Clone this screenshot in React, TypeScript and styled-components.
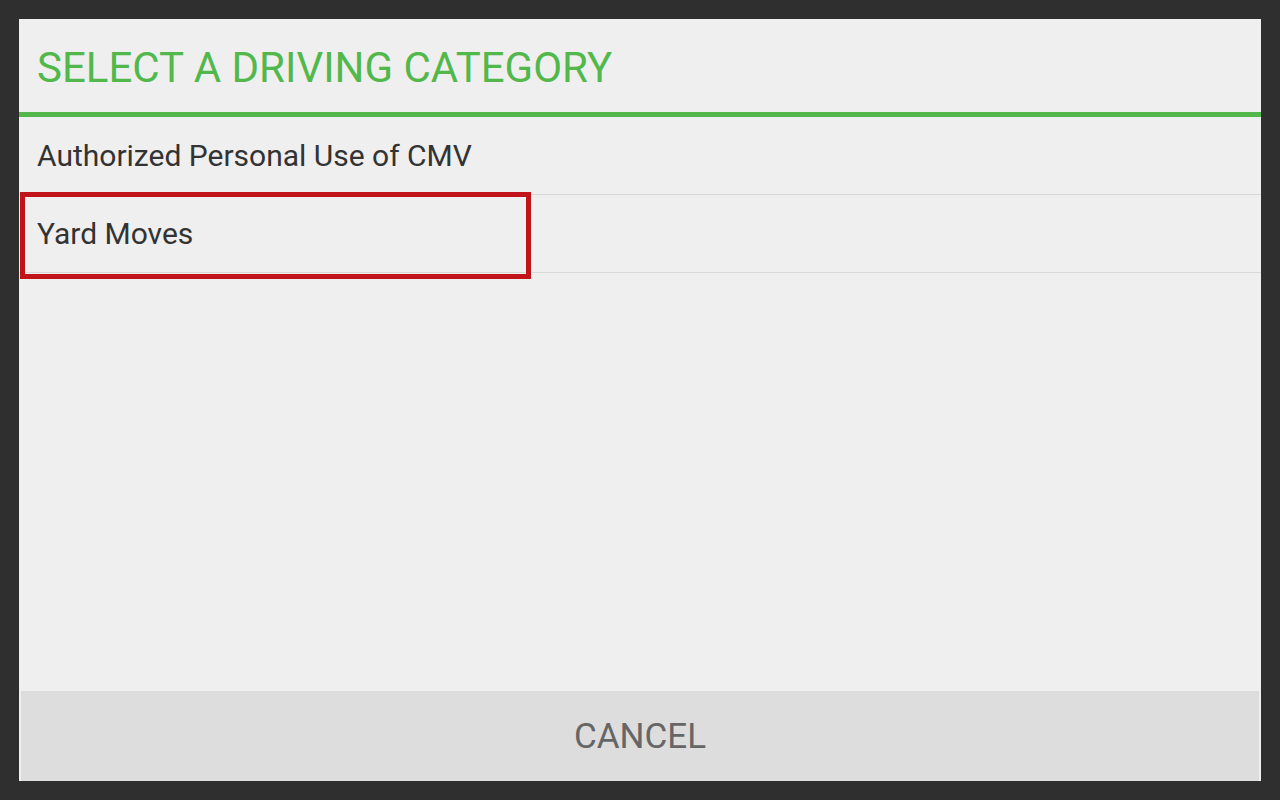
import React from 'react'
import styled, { createGlobalStyle } from 'styled-components'

const Global = createGlobalStyle`
  html, body {
    margin: 0;
    padding: 0;
    background: #2f2f2f;
  }
  * {
    box-sizing: border-box;
  }
`

const Screen = styled.div`
  width: 1280px;
  height: 800px;
  padding: 19px;
  font-family: Roboto, 'Liberation Sans', sans-serif;
`

const Dialog = styled.div`
  height: 100%;
  background: #efefef;
  display: flex;
  flex-direction: column;
`

const Header = styled.div`
  height: 98px;
  display: flex;
  align-items: center;
  padding: 3px 18px 0;
  border-bottom: 5px solid #52b84b;
  h1 {
    margin: 0;
    font-size: 42px;
    font-weight: 400;
    color: #52b84b;
  }
`

const List = styled.div`
  flex: 1;
  display: flex;
  flex-direction: column;
`

const Row = styled.div`
  position: relative;
  height: 78px;
  display: flex;
  align-items: center;
  padding: 0 18px;
  border-bottom: 1px solid #d8d8d8;
  font-size: 30px;
  color: #333333;
  cursor: pointer;
`

// red outline drawn over the selected row
const Highlight = styled.div`
  position: absolute;
  left: 1px;
  top: -3px;
  width: 511px;
  height: 87px;
  border: 5px solid #c0141a;
  pointer-events: none;
`

const Footer = styled.div`
  height: 90px;
  margin: 0 2px;
  background: #dddddd;
  display: flex;
  align-items: center;
  justify-content: center;
  font-size: 35px;
  color: #666666;
  cursor: pointer;
`

const items = ['Authorized Personal Use of CMV', 'Yard Moves']

export default function App() {
  const [selected] = React.useState(1)
  return (
    <Screen>
      <Global />
      <Dialog>
        <Header>
          <h1>SELECT A DRIVING CATEGORY</h1>
        </Header>
        <List>
          {items.map((label, i) => (
            <Row key={label}>
              {label}
              {i === selected && <Highlight />}
            </Row>
          ))}
        </List>
        <Footer>CANCEL</Footer>
      </Dialog>
    </Screen>
  )
}
